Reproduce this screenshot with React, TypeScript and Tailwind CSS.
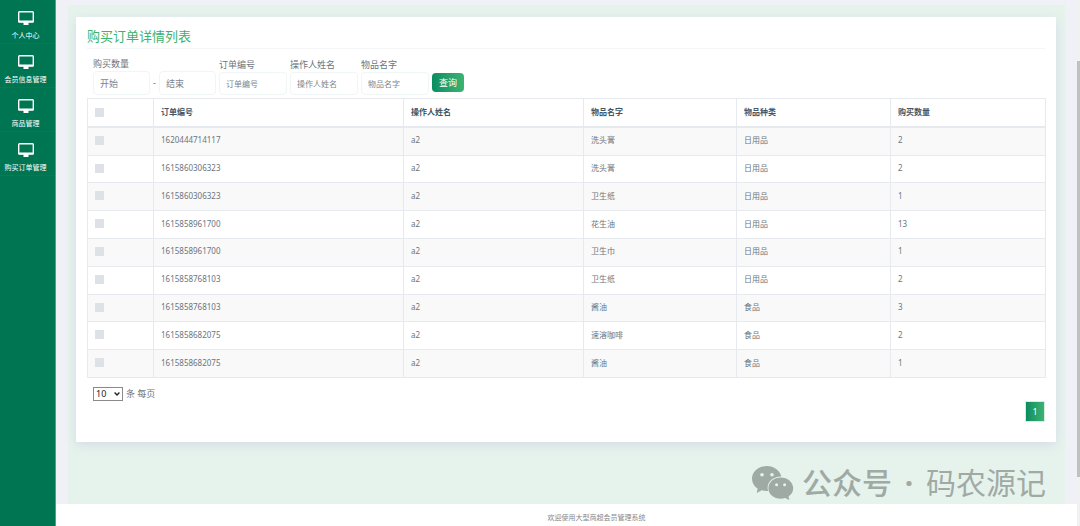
import React from "react";

type Order = {
  no: string;
  operator: string;
  item: string;
  kind: string;
  amount: number;
};

const menu = ["个人中心", "会员信息管理", "商品管理", "购买订单管理"];

const orders: Order[] = [
  { no: "1620444714117", operator: "a2", item: "洗头膏", kind: "日用品", amount: 2 },
  { no: "1615860306323", operator: "a2", item: "洗头膏", kind: "日用品", amount: 2 },
  { no: "1615860306323", operator: "a2", item: "卫生纸", kind: "日用品", amount: 1 },
  { no: "1615858961700", operator: "a2", item: "花生油", kind: "日用品", amount: 13 },
  { no: "1615858961700", operator: "a2", item: "卫生巾", kind: "日用品", amount: 1 },
  { no: "1615858768103", operator: "a2", item: "卫生纸", kind: "日用品", amount: 2 },
  { no: "1615858768103", operator: "a2", item: "酱油", kind: "食品", amount: 3 },
  { no: "1615858682075", operator: "a2", item: "速溶咖啡", kind: "食品", amount: 2 },
  { no: "1615858682075", operator: "a2", item: "酱油", kind: "食品", amount: 1 },
];

const textFilters = [
  { id: "order-no", label: "订单编号" },
  { id: "operator", label: "操作人姓名" },
  { id: "item-name", label: "物品名字" },
];

function MonitorIcon() {
  return (
    <svg viewBox="0 0 16 14" className="h-3.5 w-4" aria-hidden="true">
      <rect x="0.7" y="0.7" width="14.6" height="10.300" rx="0.8" fill="none" stroke="#fff" strokeWidth="1.4" />
      <path d="M0.5 9.6h15v1.700h-15zM5.500 11h5v3h-5z" fill="#fff" />
    </svg>
  );
}

function WeChatIcon() {
  return (
    <svg viewBox="0 0 42 34" className="h-[34px] w-[42px]" fill="#a0aaa5" aria-hidden="true">
      <path
        fillRule="evenodd"
        d="M15 0C6.700 0 0 5.600 0 12.700c0 4 2.100 7.500 5.600 9.900L4.800 27l5-2.700c1.900.5 3.300.9 5.200.8l1.200-.1c-.4-1-.6-2-.6-3.100 0-6.300 5.800-11.300 12.900-11.300h.9C27.700 4.200 22 0 15 0zM10 6.900a1.800 1.800 0 1 1 0 3.600 1.800 1.800 0 0 1 0-3.600zm10 0a1.800 1.800 0 1 1 0 3.600 1.800 1.800 0 0 1 0-3.600z"
      />
      <path
        fillRule="evenodd"
        d="M41.200 22.200c0-5.900-5.700-10.600-12.500-10.600S16.400 16.300 16.400 22.200s5.500 10.500 12.300 10.500c1.600 0 3.100-.3 4.500-.7l4.200 2-.9-3.500c3-2 4.700-5 4.700-8.300zM24.600 17.200a1.500 1.500 0 1 1 0 3 1.500 1.500 0 0 1 0-3zm8 0a1.500 1.500 0 1 1 0 3 1.500 1.500 0 0 1 0-3z"
      />
    </svg>
  );
}

function Tick({ label }: { label: string }) {
  return (
    <input
      type="checkbox"
      aria-label={label}
      className="block h-[9px] w-[9px] appearance-none bg-[#dee2e6] checked:bg-[#00755a]"
    />
  );
}

const cell = "border border-[#e6e9ed] px-[7px] pb-0.5 pt-0 text-left";
const headCell = "h-[28px] border border-b-2 border-[#e6e9ed] px-[7px] py-0 text-left";
const field =
  "rounded-sm border border-[#f0f6f5] bg-white px-1.5 text-[#495057] placeholder:text-[#7d858c] outline-none";

export default function App() {
  return (
    <div className="flex min-h-screen bg-[#f0f1f6] font-['Noto_Sans','Noto_Sans_CJK_SC',sans-serif] text-[#6c757d]">
      <nav className="w-14 shrink-0 border-r border-[#4f9f88] bg-[#007551]">
        <ul>
          {menu.map((name) => (
            <li key={name} className="border-b border-[#047a57]">
              <a href="#" className="flex h-[43px] flex-col items-center gap-1 pr-1 pt-[11px] text-white">
                <MonitorIcon />
                <span className="whitespace-nowrap text-[7px] leading-[13px]">{name}</span>
              </a>
            </li>
          ))}
        </ul>
      </nav>

      <div className="flex min-w-0 flex-1 flex-col">
        <main className="ml-3 mr-3 mt-[5px] flex flex-1 flex-col bg-[#e6f3ec] pl-2 pr-[9px] pt-3">
          <section className="rounded-[1px] bg-white px-[11px] pb-5 pt-2.5 shadow-[0_3px_12px_#d3dbe8]">
            <h1 className="border-b border-[#f5f6f7] pb-[3px] text-[13px] leading-[18px] text-[#3cb371]">
              购买订单详情列表
            </h1>

            <form className="flex items-end gap-[3px] px-1.5 pt-2 text-[9px]" onSubmit={(e) => e.preventDefault()}>
              <fieldset>
                <legend className="leading-[14px]">购买数量</legend>
                <div className="flex items-center gap-[3px]">
                  <input aria-label="开始" placeholder="开始" className={`${field} h-6 w-[57px]`} />
                  <span>-</span>
                  <input aria-label="结束" placeholder="结束" className={`${field} h-6 w-[57px]`} />
                </div>
              </fieldset>
              {textFilters.map((f) => (
                <div key={f.id} className="flex flex-col">
                  <label htmlFor={f.id} className="leading-[14px]">
                    {f.label}
                  </label>
                  <input id={f.id} placeholder={f.label} className={`${field} h-[23px] w-[68px] text-[8px]`} />
                </div>
              ))}
              <button
                type="submit"
                className="mb-[3px] h-[19px] w-8 rounded-sm bg-linear-to-r from-[#078d61] to-[#3cb371] text-white"
              >
                查询
              </button>
            </form>

            <table className="mt-[3px] h-[280px] w-full table-fixed border-collapse text-[8px] leading-[12px]">
              <colgroup>
                <col className="w-[66px]" />
                <col className="w-[250px]" />
                <col className="w-[180px]" />
                <col className="w-[153px]" />
                <col className="w-[154px]" />
                <col className="w-[155px]" />
              </colgroup>
              <thead>
                <tr className="text-[#455565]">
                  <th className={headCell}>
                    <Tick label="全选" />
                  </th>
                  <th className={headCell}>订单编号</th>
                  <th className={headCell}>操作人姓名</th>
                  <th className={headCell}>物品名字</th>
                  <th className={headCell}>物品种类</th>
                  <th className={headCell}>购买数量</th>
                </tr>
              </thead>
              <tbody>
                {orders.map((o, i) => (
                  <tr key={i} className="odd:bg-[#f9f9f9]">
                    <td className={cell}>
                      <Tick label={o.no} />
                    </td>
                    <td className={cell}>{o.no}</td>
                    <td className={cell}>{o.operator}</td>
                    <td className={cell}>{o.item}</td>
                    <td className={cell}>{o.kind}</td>
                    <td className={cell}>{o.amount}</td>
                  </tr>
                ))}
              </tbody>
            </table>

            <div className="mt-[9px] flex items-center gap-[3px] px-1.5 text-[9px] leading-[14px]">
              <div className="relative">
                <select
                  id="page-size"
                  defaultValue="10"
                  className="block h-[14px] w-[30px] appearance-none border border-[#8a8a8a] bg-white pl-0.5 text-[9px] leading-[12px] text-[#222]"
                >
                  <option>10</option>
                  <option>25</option>
                  <option>50</option>
                </select>
                <svg
                  viewBox="0 0 6 4"
                  className="pointer-events-none absolute right-[3px] top-[5px] h-1 w-1.5"
                  fill="none"
                  stroke="#222"
                  strokeWidth="1.4"
                  aria-hidden="true"
                >
                  <path d="M0.600 0.600 3 3l2.400-2.400" />
                </svg>
              </div>
              <label htmlFor="page-size">条 每页</label>
            </div>
            <div className="flex justify-end">
              <button
                type="button"
                className="h-[21px] w-5 border border-[#d5eee1] bg-linear-to-r from-[#078d61] to-[#3cb371] text-[9px] text-white"
              >
                1
              </button>
            </div>
          </section>

          <div className="mt-auto flex items-center justify-end pb-[3px] pr-2.5 pt-4 text-[30px] leading-[36px] text-[#a0aaa5]">
            <WeChatIcon />
            <span className="pl-2 font-medium">公众号</span>
            <span className="w-[34px] text-center font-bold">·</span>
            <span>码农源记</span>
          </div>
        </main>
        <footer className="bg-white pb-[3px] pl-[60px] pt-[9px] text-center text-[7px] leading-[10px] text-[#888]">
          欢迎使用大型商超会员管理系统
        </footer>
      </div>

      <div className="w-[3px] shrink-0 bg-[#f1f1f1] pt-[61px]" aria-hidden="true">
        <div className="h-[416px] bg-[#c1c1c1]" />
      </div>
    </div>
  );
}
